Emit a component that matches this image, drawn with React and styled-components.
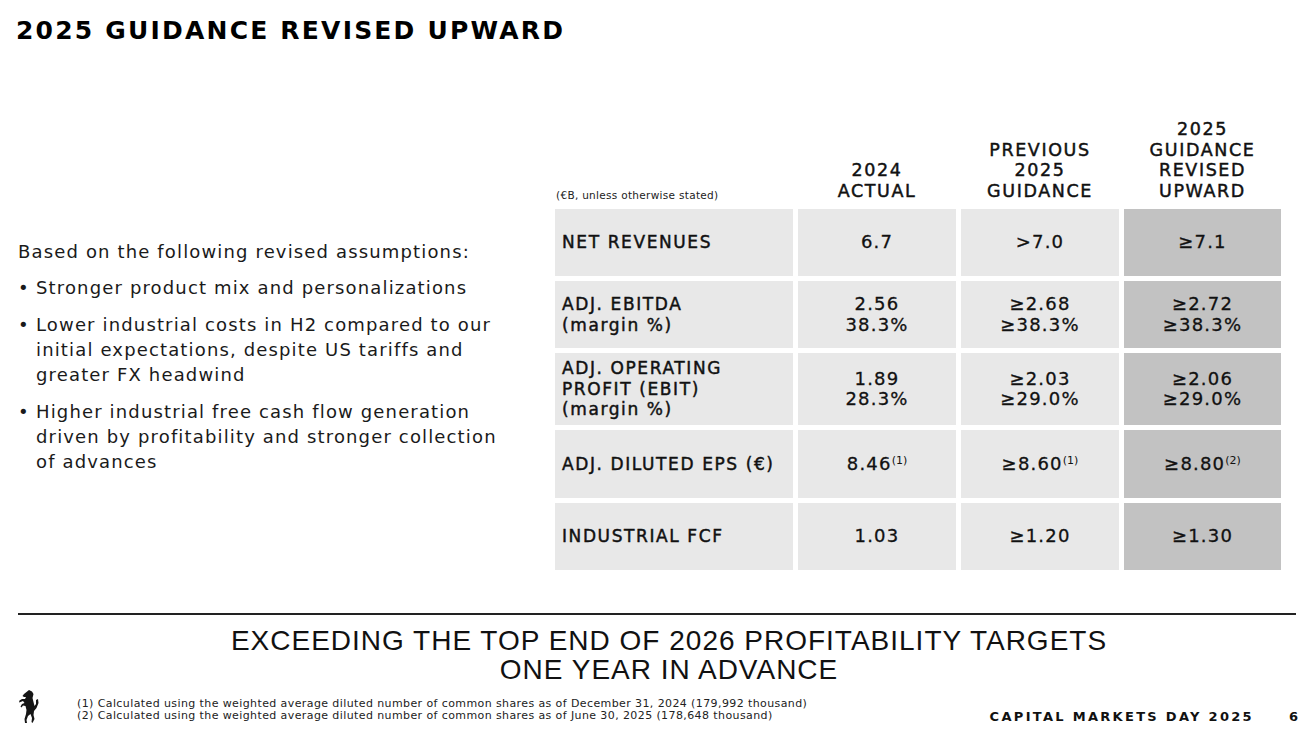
import React from "react";
import styled, { createGlobalStyle } from "styled-components";

const GlobalStyle = createGlobalStyle`
  html, body {
    margin: 0;
    padding: 0;
    background: #ffffff;
  }
  body {
    font-family: "DejaVu Sans", "Liberation Sans", sans-serif;
    color: #111111;
  }
`;

const Slide = styled.div`
  width: 1314px;
  height: 742px;
  display: flex;
  flex-direction: column;
  background: #ffffff;
  overflow: hidden;
`;

const Title = styled.h1`
  margin: 0;
  padding: 17px 0 0 16px;
  font-family: "DejaVu Sans", sans-serif;
  font-weight: 700;
  font-size: 25px;
  line-height: 28px;
  letter-spacing: 2.2px;
  color: #000;
`;

const Main = styled.div`
  display: flex;
  margin-top: 75px;
  height: 450px;
`;

const Assumptions = styled.div`
  width: 537px;
  padding: 119px 0 0 18px;
  font-size: 18px;
  line-height: 25px;
  letter-spacing: 1.15px;
  color: #1a1a1a;
`;

const Intro = styled.p`
  margin: 0 0 11px;
  white-space: nowrap;
`;

const Bullets = styled.ul`
  list-style: none;
  margin: 0;
  padding: 0;
  display: flex;
  flex-direction: column;
  gap: 12px;
`;

const Bullet = styled.li`
  display: flex;
  white-space: nowrap;

  &::before {
    content: "•";
    width: 18px;
    flex: none;
    letter-spacing: 0;
  }
`;

const Table = styled.div`
  display: grid;
  grid-template-columns: 238px 158px 158px 157px;
  grid-template-rows: 84px 67px 67px 72px 68px 67px;
  gap: 5px;
`;

const Unit = styled.div`
  display: flex;
  align-items: flex-end;
  padding: 0 0 3px 1px;
  font-size: 10.5px;
  line-height: 12px;
  letter-spacing: 0.3px;
  color: #222;
`;

const ColHead = styled.div`
  display: flex;
  align-items: flex-end;
  justify-content: center;
  text-align: center;
  padding-bottom: 3px;
  font-size: 17.5px;
  font-weight: 400;
  -webkit-text-stroke: 0.45px #111;
  line-height: 20.5px;
  letter-spacing: 1.6px;
  color: #111;
`;

const Label = styled.div`
  display: flex;
  align-items: center;
  padding-left: 7px;
  background: #e8e8e8;
  font-size: 17px;
  font-weight: 400;
  -webkit-text-stroke: 0.45px #111;
  line-height: 20.5px;
  letter-spacing: 1.6px;
  color: #111;
`;

const Value = styled.div`
  display: flex;
  align-items: center;
  justify-content: center;
  text-align: center;
  background: ${(p) => (p.$highlight ? "#c2c2c2" : "#e8e8e8")};
  font-size: 18px;
  font-weight: 400;
  -webkit-text-stroke: 0.3px #111;
  line-height: 20.5px;
  letter-spacing: 1.2px;
  color: #111;
`;

const Sup = styled.sup`
  font-size: 11px;
  line-height: 0;
  letter-spacing: 0;
  vertical-align: 6px;
  margin-left: 0;
  -webkit-text-stroke: 0;
`;

const Rule = styled.hr`
  margin: 43px 18px 0;
  border: none;
  height: 2px;
  background: #222;
`;

const Tagline = styled.p`
  margin: 11px 0 0;
  padding-left: 24px;
  text-align: center;
  font-family: "Liberation Sans", sans-serif;
  font-size: 28px;
  line-height: 29px;
  letter-spacing: 1px;
  color: #111;
`;

const Footer = styled.div`
  display: flex;
  align-items: flex-start;
  margin-top: 3px;
  padding: 0 16px 0 15px;
`;

const Logo = styled.svg`
  width: 24px;
  height: 34px;
  margin-top: 3px;
  flex: none;
`;

const Notes = styled.div`
  margin: 11px 0 0 38px;
  font-size: 11px;
  line-height: 12px;
  letter-spacing: 0.4px;
  color: #222;
  white-space: nowrap;
`;

const Event = styled.div`
  margin: 23px 0 0 auto;
  font-size: 13px;
  font-weight: 700;
  letter-spacing: 2.3px;
  line-height: 14px;
  color: #111;
`;

const PageNo = styled.div`
  margin: 23px 0 0 35px;
  font-size: 13px;
  font-weight: 700;
  line-height: 14px;
  color: #111;
`;

const rows = [
  { label: ["NET REVENUES"], values: [["6.7"], [">7.0"], ["≥7.1"]] },
  {
    label: ["ADJ. EBITDA", "(margin %)"],
    values: [["2.56", "38.3%"], ["≥2.68", "≥38.3%"], ["≥2.72", "≥38.3%"]],
  },
  {
    label: ["ADJ. OPERATING", "PROFIT (EBIT)", "(margin %)"],
    values: [["1.89", "28.3%"], ["≥2.03", "≥29.0%"], ["≥2.06", "≥29.0%"]],
  },
  {
    label: ["ADJ. DILUTED EPS (€)"],
    values: [["8.46"], ["≥8.60"], ["≥8.80"]],
    notes: ["(1)", "(1)", "(2)"],
  },
  { label: ["INDUSTRIAL FCF"], values: [["1.03"], ["≥1.20"], ["≥1.30"]] },
];

const Lines = ({ lines }) =>
  lines.map((l, i) => (
    <React.Fragment key={i}>
      {i > 0 && <br />}
      {l}
    </React.Fragment>
  ));

// prancing horse, drawn roughly
const Horse = () => (
  <Logo viewBox="0 0 24 34">
    <path
      fill="#151515"
      d="M14 0 L17 1.5 L18.5 4 L17.5 8 L18.5 12 L19.5 16 L21 14 L21 10 L23 9 L23.5 13 L21.5 18 L19 21 L18.5 25 L19.5 29 L17.5 33 L16.5 32 L17 28 L15.5 24 L13 26 L11.5 30 L12 33 L10 33 L9.5 29 L11 24 L11.5 20 L10.5 16 L8 15.5 L6.5 17.5 L5.5 16.5 L7 14 L9.5 13 L8 11 L5.5 12 L4 12.5 L4.5 10.5 L7 9 L10 9 L11 7 L9 7 L7.5 6 L9 4 L11.5 2 Z"
    />
  </Logo>
);

export default function App() {
  return (
    <>
      <GlobalStyle />
      <Slide>
        <Title>2025 GUIDANCE REVISED UPWARD</Title>

        <Main>
          <Assumptions>
            <Intro>Based on the following revised assumptions:</Intro>
            <Bullets>
              <Bullet>
                <span>Stronger product mix and personalizations</span>
              </Bullet>
              <Bullet>
                <span>
                  Lower industrial costs in H2 compared to our
                  <br />
                  initial expectations, despite US tariffs and
                  <br />
                  greater FX headwind
                </span>
              </Bullet>
              <Bullet>
                <span>
                  Higher industrial free cash flow generation
                  <br />
                  driven by profitability and stronger collection
                  <br />
                  of advances
                </span>
              </Bullet>
            </Bullets>
          </Assumptions>

          <Table>
            <Unit>(€B, unless otherwise stated)</Unit>
            <ColHead>
              2024
              <br />
              ACTUAL
            </ColHead>
            <ColHead>
              PREVIOUS
              <br />
              2025
              <br />
              GUIDANCE
            </ColHead>
            <ColHead>
              2025
              <br />
              GUIDANCE
              <br />
              REVISED
              <br />
              UPWARD
            </ColHead>

            {rows.map((row) => (
              <React.Fragment key={row.label[0]}>
                <Label>
                  <div>
                    <Lines lines={row.label} />
                  </div>
                </Label>
                {row.values.map((v, i) => (
                  <Value key={i} $highlight={i === 2}>
                    <div>
                      <Lines lines={v} />
                      {row.notes && <Sup>{row.notes[i]}</Sup>}
                    </div>
                  </Value>
                ))}
              </React.Fragment>
            ))}
          </Table>
        </Main>

        <Rule />
        <Tagline>
          EXCEEDING THE TOP END OF 2026 PROFITABILITY TARGETS
          <br />
          ONE YEAR IN ADVANCE
        </Tagline>

        <Footer>
          <Horse />
          <Notes>
            (1) Calculated using the weighted average diluted number of common
            shares as of December 31, 2024 (179,992 thousand)
            <br />
            (2) Calculated using the weighted average diluted number of common
            shares as of June 30, 2025 (178,648 thousand)
          </Notes>
          <Event>CAPITAL MARKETS DAY 2025</Event>
          <PageNo>6</PageNo>
        </Footer>
      </Slide>
    </>
  );
}
